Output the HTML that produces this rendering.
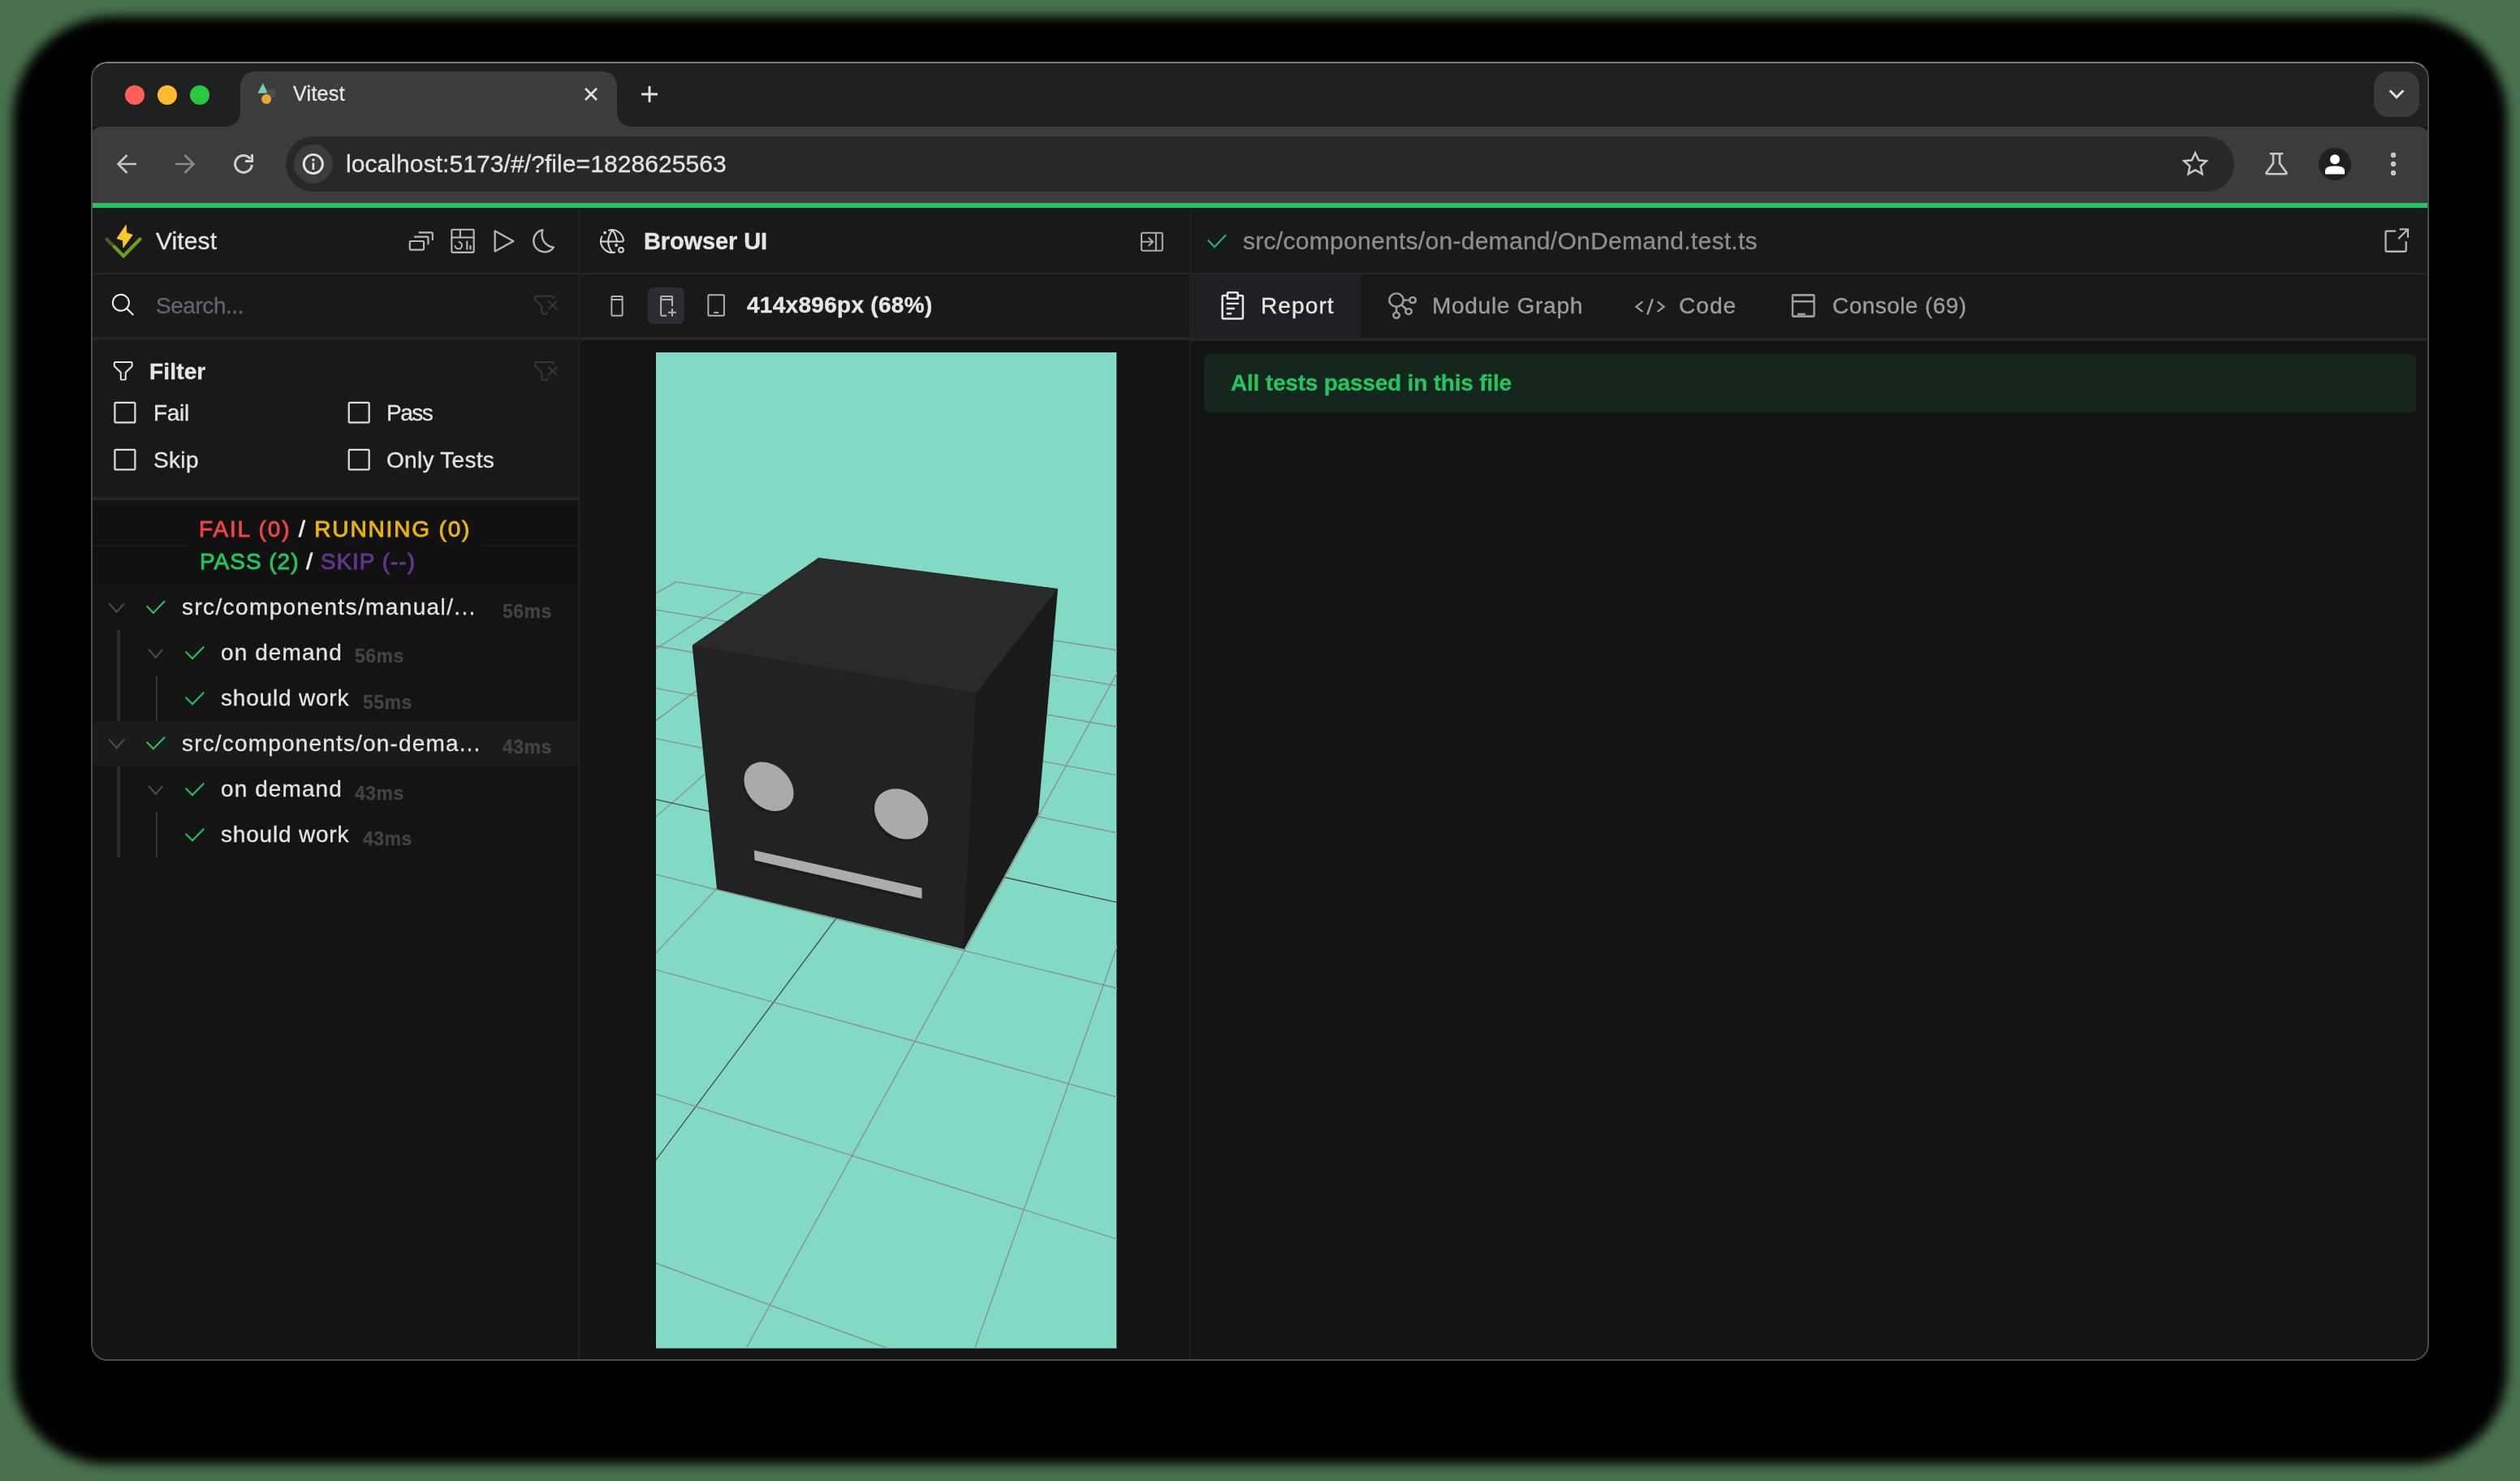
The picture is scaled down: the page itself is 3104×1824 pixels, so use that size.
<!DOCTYPE html><html><head><meta charset="utf-8"><style>
html,body{margin:0;padding:0;}
body{width:3104px;height:1824px;background:#48724e;position:relative;overflow:hidden;font-family:"Liberation Sans", sans-serif;}
.t{position:absolute;white-space:nowrap;line-height:1;-webkit-text-stroke:0.3px currentColor;will-change:transform;}
.r{position:absolute;}
.s{position:absolute;overflow:visible;}
#win{position:absolute;left:112px;top:76px;width:2880px;height:1600px;border-radius:20px;overflow:hidden;background:#141414;}
#frame{position:absolute;left:-112px;top:-76px;width:3104px;height:1824px;}
</style></head><body>
<div class="r" style="left:16px;top:20px;width:3072px;height:1783px;background:#000;border-radius:125px 125px 115px 115px;filter:blur(7px);"></div>
<div id="win"><div id="frame">
<div class="r" style="left:112px;top:76px;width:2880px;height:80px;background:#1f2020;border-radius:0px;"></div>
<div class="r" style="left:154px;top:105px;width:24px;height:24px;background:#ff5f57;border-radius:12px;"></div>
<div class="r" style="left:194px;top:105px;width:24px;height:24px;background:#febc2e;border-radius:12px;"></div>
<div class="r" style="left:234px;top:105px;width:24px;height:24px;background:#28c840;border-radius:12px;"></div>
<svg class="s" style="left:270px;top:86px;" width="520" height="72" viewBox="270 86 520 72"><path d="M276 156 Q296 156 296 136 L296 108 Q296 88 316 88 L740 88 Q760 88 760 108 L760 136 Q760 156 780 156 Z" fill="#3c3c3c"/></svg>
<svg class="s" style="left:314px;top:100px;" width="28" height="30" viewBox="314 100 28 30"><path d="M323.8 102.5 L330 114.8 L317.5 114.8 Z" fill="#6fd3bd"/><rect x="328.6" y="109.7" width="10.3" height="11.1" fill="#4d4d4d"/><circle cx="328.1" cy="122" r="6" fill="#e9a832"/></svg>
<div id="t_tab" class="t" style="left:361.0px;top:103.1px;font-size:25px;color:#e6e6e6;letter-spacing:0.3px;">Vitest</div>
<svg class="s" style="left:715px;top:103px;" width="26" height="26" viewBox="715 103 26 26"><path d="M721 109 L735 123 M735 109 L721 123" stroke="#e3e3e3" stroke-width="2.6"/></svg>
<svg class="s" style="left:786px;top:102px;" width="28" height="28" viewBox="786 102 28 28"><path d="M790 116 H810 M800 106 V126" stroke="#e3e3e3" stroke-width="2.8"/></svg>
<div class="r" style="left:2924px;top:88px;width:56px;height:56px;background:#3a3a3a;border-radius:18px;"></div>
<svg class="s" style="left:2938px;top:104px;" width="28" height="24" viewBox="2938 104 28 24"><path d="M2943.7 111.4 L2952 119.8 L2960.3 111.4" stroke="#e3e3e3" stroke-width="2.8" fill="none"/></svg>
<div class="r" style="left:112px;top:156px;width:2880px;height:94px;background:#3c3c3c;border-radius:13px 13px 0 0;"></div>
<svg class="s" style="left:140px;top:186px;" width="32" height="32" viewBox="140 186 32 32"><path d="M168 202 H146 M156.5 191 L145.5 202 L156.5 213" stroke="#c7c7c7" stroke-width="2.6" fill="none"/></svg>
<svg class="s" style="left:212px;top:186px;" width="32" height="32" viewBox="212 186 32 32"><path d="M216 202 H238 M227.5 191 L238.5 202 L227.5 213" stroke="#8a8a8a" stroke-width="2.6" fill="none"/></svg>
<svg class="s" style="left:284px;top:186px;" width="32" height="32" viewBox="284 186 32 32"><path d="M308.2 195.6 A10.4 10.4 0 1 0 310.35 203" stroke="#d0d0d0" stroke-width="3" fill="none"/><path d="M302 198.5 H310.5 V189.9" stroke="#d0d0d0" stroke-width="3.1" fill="none" stroke-linejoin="miter"/></svg>
<div class="r" style="left:352px;top:168px;width:2400px;height:68px;background:#282828;border-radius:34px;"></div>
<div class="r" style="left:362px;top:178px;width:48px;height:48px;background:#3c3c3c;border-radius:24px;"></div>
<svg class="s" style="left:370px;top:186px;" width="32" height="32" viewBox="370 186 32 32"><circle cx="385.8" cy="202" r="11.6" stroke="#e3e3e3" stroke-width="2.9" fill="none"/><rect x="384.6" y="200.5" width="2.6" height="8.5" fill="#e3e3e3"/><circle cx="385.9" cy="196.9" r="1.7" fill="#e3e3e3"/></svg>
<div id="t_url" class="t" style="left:425.8px;top:186.7px;font-size:30px;color:#e3e3e3;letter-spacing:0.08px;">localhost:5173/#/?file=1828625563</div>
<svg class="s" style="left:2684px;top:182px;" width="40" height="40" viewBox="2684 182 40 40"><path d="M2704 188.5 L2708.2 197.3 L2717.8 198.3 L2710.6 204.8 L2712.6 214.2 L2704 209.4 L2695.4 214.2 L2697.4 204.8 L2690.2 198.3 L2699.8 197.3 Z" stroke="#c7c7c7" stroke-width="2.5" fill="none"/></svg>
<svg class="s" style="left:2786px;top:184px;" width="36" height="36" viewBox="2786 184 36 36"><path d="M2795.8 189.3 H2812.2 M2800 189.3 V201 L2791.8 212.5 Q2790.8 214.3 2793 214.3 H2815 Q2817.2 214.3 2816.2 212.5 L2808 201 V189.3" stroke="#c7c7c7" stroke-width="2.6" fill="none"/></svg>
<div class="r" style="left:2856px;top:182px;width:40px;height:40px;background:#1f1f1f;border-radius:20px;"></div>
<svg class="s" style="left:2860px;top:186px;" width="32" height="32" viewBox="2860 186 32 32"><circle cx="2876" cy="196.3" r="6" fill="#fff"/><path d="M2864 214.4 V210 Q2864 204.6 2876 204.6 Q2888 204.6 2888 210 V214.4 Z" fill="#fff"/></svg>
<svg class="s" style="left:2940px;top:186px;" width="16" height="32" viewBox="2940 186 16 32"><circle cx="2948" cy="191" r="3.2" fill="#c7c7c7"/><circle cx="2948" cy="202" r="3.2" fill="#c7c7c7"/><circle cx="2948" cy="213" r="3.2" fill="#c7c7c7"/></svg>
<div class="r" style="left:112px;top:250px;width:2880px;height:6px;background:#22c55e;border-radius:0px;"></div>
<div class="r" style="left:112px;top:256px;width:601px;height:360px;background:#18191b;border-radius:0px;"></div>
<div class="r" style="left:112px;top:616px;width:601px;height:1060px;background:#141414;border-radius:0px;"></div>
<div class="r" style="left:112px;top:624px;width:601px;height:96px;background:#111111;border-radius:0px;"></div>
<div class="r" style="left:112px;top:336px;width:601px;height:2px;background:#242527;border-radius:0px;"></div>
<div class="r" style="left:112px;top:415px;width:601px;height:4px;background:#242527;border-radius:0px;"></div>
<div class="r" style="left:112px;top:612px;width:601px;height:4px;background:#242527;border-radius:0px;"></div>
<div class="r" style="left:112px;top:671px;width:118px;height:2px;background:#1c1c1c;border-radius:0px;"></div>
<div class="r" style="left:594px;top:671px;width:119px;height:2px;background:#1c1c1c;border-radius:0px;"></div>
<div class="r" style="left:712px;top:256px;width:2px;height:1420px;background:#202020;border-radius:0px;"></div>
<div class="r" style="left:714px;top:256px;width:752px;height:163px;background:#18191b;border-radius:0px;"></div>
<div class="r" style="left:714px;top:336px;width:752px;height:2px;background:#242527;border-radius:0px;"></div>
<div class="r" style="left:714px;top:415px;width:752px;height:4px;background:#242527;border-radius:0px;"></div>
<div class="r" style="left:1465px;top:256px;width:2px;height:1420px;background:#202020;border-radius:0px;"></div>
<div class="r" style="left:1467px;top:256px;width:1525px;height:164px;background:#18191b;border-radius:0px;"></div>
<div class="r" style="left:1467px;top:336px;width:1525px;height:2px;background:#242527;border-radius:0px;"></div>
<div class="r" style="left:1467px;top:338px;width:209px;height:78px;background:#1f2023;border-radius:0px;"></div>
<div class="r" style="left:1467px;top:416px;width:1525px;height:4px;background:#242527;border-radius:0px;"></div>
<svg class="s" style="left:126px;top:272px;" width="52" height="50" viewBox="126 272 52 50"><path d="M131.3 294.5 L141.2 304.3" stroke="#4b5e1d" stroke-width="4.2" fill="none" stroke-linecap="round"/>
<path d="M141 304.1 L152.1 315.3 L172.5 294.5" stroke="#729b1b" stroke-width="4.2" fill="none" stroke-linecap="round" stroke-linejoin="miter"/>
<path d="M155.3 277.1 L155.8 286.7 L163.3 289.3 L151.9 304.9 L151.4 296 L143.9 293.8 Z" fill="#fcc72b" stroke="#fcc72b" stroke-width="0.8" stroke-linejoin="round"/></svg>
<div id="t_side" class="t" style="left:192.3px;top:282.0px;font-size:30px;color:#e3e3e3;letter-spacing:0.1px;">Vitest</div>
<svg class="s" style="left:0;top:0" width="3104" height="1824" viewBox="0 0 3104 1824"><g transform="matrix(1.0786 0 0 1.0636 501.54 279.98)" fill="#b9b9b9"><path d="M30 15h-2V7H13V5h15a2.002 2.002 0 0 1 2 2z"/><path d="M25 20h-2v-8H8v-2h15a2.002 2.002 0 0 1 2 2z"/><path d="M18 27H4a2.002 2.002 0 0 1-2-2v-8a2.002 2.002 0 0 1 2-2h14a2.002 2.002 0 0 1 2 2v8a2.002 2.002 0 0 1-2 2zM4 17v8h14.001L18 17z"/></g></svg>
<svg class="s" style="left:0;top:0" width="3104" height="1824" viewBox="0 0 3104 1824"><g transform="matrix(1.0500 0 0 1.0786 553.20 279.54)" fill="#b9b9b9"><path d="M24 21h2v5h-2zm-4-5h2v10h-2zm-9 10a5.006 5.006 0 0 1-5-5h2a3 3 0 1 0 3-3v-2a5 5 0 0 1 0 10z"/><path d="M28 2H4a2.002 2.002 0 0 0-2 2v24a2.002 2.002 0 0 0 2 2h24a2.003 2.003 0 0 0 2-2V4a2.002 2.002 0 0 0-2-2zm.001 9H14V4h14zM12 4v7H4V4zM4 28V13h24l.002 15z"/></g></svg>
<svg class="s" style="left:0;top:0" width="3104" height="1824" viewBox="0 0 3104 1824"><g transform="matrix(1.1364 0 0 1.1417 601.68 278.73)" fill="#b9b9b9"><path d="M7 28a1 1 0 0 1-1-1V5a1 1 0 0 1 1.482-.876l20 11a1 1 0 0 1 0 1.752l-20 11A1 1 0 0 1 7 28zM8 6.69v18.62L24.925 16z"/></g></svg>
<svg class="s" style="left:0;top:0" width="3104" height="1824" viewBox="0 0 3104 1824"><g transform="matrix(1.1256 0 0 1.1308 651.59 278.71)" fill="#b9b9b9"><path d="M13.503 5.414a15.076 15.076 0 0 0 11.593 18.194a11.113 11.113 0 0 1-7.975 3.39c-.138 0-.278.005-.418 0a11.094 11.094 0 0 1-3.2-21.584M14.98 3a1.002 1.002 0 0 0-.175.016a13.096 13.096 0 0 0 1.825 25.981c.164.006.328 0 .49 0a13.072 13.072 0 0 0 10.703-5.555a1.01 1.01 0 0 0-.783-1.565A13.08 13.08 0 0 1 15.89 4.38A1.015 1.015 0 0 0 14.98 3z"/></g></svg>
<svg class="s" style="left:0;top:0" width="3104" height="1824" viewBox="0 0 3104 1824"><g transform="matrix(1.0061 0 0 0.9950 135.82 359.85)" fill="#ececec"><path d="M29 27.586l-7.552-7.552a11.018 11.018 0 1 0-1.414 1.414L27.586 29zM4 13a9 9 0 1 1 9 9a9.01 9.01 0 0 1-9-9z"/></g></svg>
<div id="t_search" class="t" style="left:192.0px;top:362.6px;font-size:28px;color:#62656b;letter-spacing:-0.45px;">Search...</div>
<svg class="s" style="left:0;top:0" width="3104" height="1824" viewBox="0 0 3104 1824"><g transform="matrix(1.0357 0 0 0.9875 655.93 359.85)" fill="#36373a"><path d="M30 11.414L28.586 10L24 14.586L19.414 10L18 11.414L22.586 16L18 20.585L19.415 22L24 17.414L28.587 22L30 20.587L25.414 16L30 11.414z"/><path d="M4 4a2 2 0 0 0-2 2v3.17a2 2 0 0 0 .586 1.415L10 18v8a2 2 0 0 0 2 2h4a2 2 0 0 0 2-2v-2h-2v2h-4v-8.83l-.586-.585L4 9.171V6h20v2h2V6a2 2 0 0 0-2-2z"/></g></svg>
<svg class="s" style="left:0;top:0" width="3104" height="1824" viewBox="0 0 3104 1824"><g transform="matrix(0.9958 0 0 0.9833 135.82 441.07)" fill="#e3e3e3"><path d="M18 28h-4a2 2 0 0 1-2-2v-7.59L4.59 11A2 2 0 0 1 4 9.59V6a2 2 0 0 1 2-2h20a2 2 0 0 1 2 2v3.59a2 2 0 0 1-.59 1.41L20 18.41V26a2 2 0 0 1-2 2zM6 6v3.59l8 8V26h4v-8.41l8-8V6z"/></g></svg>
<div id="t_filter" class="t" style="left:184.0px;top:443.7px;font-size:28px;color:#e6e6e6;font-weight:700;letter-spacing:0.16px;">Filter</div>
<svg class="s" style="left:0;top:0" width="3104" height="1824" viewBox="0 0 3104 1824"><g transform="matrix(1.0357 0 0 1.0000 655.93 441.00)" fill="#36373a"><path d="M30 11.414L28.586 10L24 14.586L19.414 10L18 11.414L22.586 16L18 20.585L19.415 22L24 17.414L28.587 22L30 20.587L25.414 16L30 11.414z"/><path d="M4 4a2 2 0 0 0-2 2v3.17a2 2 0 0 0 .586 1.415L10 18v8a2 2 0 0 0 2 2h4a2 2 0 0 0 2-2v-2h-2v2h-4v-8.83l-.586-.585L4 9.171V6h20v2h2V6a2 2 0 0 0-2-2z"/></g></svg>
<svg class="s" style="left:0;top:0" width="3104" height="1824" viewBox="0 0 3104 1824"><g transform="matrix(1.1333 0 0 1.1167 135.77 490.23)" fill="#dadada"><path d="M26 4H6a2 2 0 0 0-2 2v20a2 2 0 0 0 2 2h20a2 2 0 0 0 2-2V6a2 2 0 0 0-2-2zM6 26V6h20v20z"/></g></svg>
<svg class="s" style="left:0;top:0" width="3104" height="1824" viewBox="0 0 3104 1824"><g transform="matrix(1.1333 0 0 1.1167 424.07 490.23)" fill="#dadada"><path d="M26 4H6a2 2 0 0 0-2 2v20a2 2 0 0 0 2 2h20a2 2 0 0 0 2-2V6a2 2 0 0 0-2-2zM6 26V6h20v20z"/></g></svg>
<svg class="s" style="left:0;top:0" width="3104" height="1824" viewBox="0 0 3104 1824"><g transform="matrix(1.1333 0 0 1.1167 135.77 548.33)" fill="#dadada"><path d="M26 4H6a2 2 0 0 0-2 2v20a2 2 0 0 0 2 2h20a2 2 0 0 0 2-2V6a2 2 0 0 0-2-2zM6 26V6h20v20z"/></g></svg>
<svg class="s" style="left:0;top:0" width="3104" height="1824" viewBox="0 0 3104 1824"><g transform="matrix(1.1333 0 0 1.1167 424.07 548.33)" fill="#dadada"><path d="M26 4H6a2 2 0 0 0-2 2v20a2 2 0 0 0 2 2h20a2 2 0 0 0 2-2V6a2 2 0 0 0-2-2zM6 26V6h20v20z"/></g></svg>
<div id="t_fail" class="t" style="left:189.0px;top:494.5px;font-size:28px;color:#e3e3e3;letter-spacing:-0.33px;">Fail</div>
<div id="t_pass" class="t" style="left:476.0px;top:494.5px;font-size:28px;color:#e3e3e3;letter-spacing:-1.5px;">Pass</div>
<div id="t_skip" class="t" style="left:189.0px;top:552.6px;font-size:28px;color:#e3e3e3;letter-spacing:0.33px;">Skip</div>
<div id="t_only" class="t" style="left:476.4px;top:552.6px;font-size:28px;color:#e3e3e3;letter-spacing:0.28px;">Only Tests</div>
<div id="t_sum1" class="t" style="left:244.6px;top:638.1px;font-size:28px;letter-spacing:1.85px;-webkit-text-stroke:0.9px currentColor;"><span style="color:#ef4444">FAIL (0)</span> <span style="color:#e8e8e8">/</span> <span style="color:#eab308">RUNNING (0)</span></div>
<div id="t_sum2" class="t" style="left:245.6px;top:678.0px;font-size:28px;letter-spacing:0.98px;-webkit-text-stroke:0.9px currentColor;"><span style="color:#22c55e">PASS (2)</span> <span style="color:#e8e8e8">/</span> <span style="color:#62368e">SKIP (--)</span></div>
<div class="r" style="left:114px;top:888px;width:598px;height:56px;background:#1b1b1b;border-radius:8px;"></div>
<div class="r" style="left:144px;top:776px;width:4px;height:112px;background:#2a2d30;border-radius:0px;"></div>
<div class="r" style="left:144px;top:944px;width:4px;height:112px;background:#2a2d30;border-radius:0px;"></div>
<div class="r" style="left:192px;top:832px;width:2px;height:56px;background:#34373a;border-radius:0px;"></div>
<div class="r" style="left:192px;top:1000px;width:2px;height:56px;background:#34373a;border-radius:0px;"></div>
<svg class="s" style="left:0;top:0" width="3104" height="1824" viewBox="0 0 3104 1824"><g transform="matrix(1.0000 0 0 1.0965 127.70 730.88)" fill="#4d4d4d"><path d="M16 22L6 12l1.4-1.4l8.6 8.6l8.6-8.6L26 12z"/></g></svg>
<svg class="s" style="left:0;top:0" width="3104" height="1824" viewBox="0 0 3104 1824"><g transform="matrix(0.9875 0 0 1.0171 176.05 731.79)" fill="#22c55e"><path d="M13 24l-9-9l1.41-1.41L13 21.17L26.59 7.58L28 9L13 24z"/></g></svg>
<div class="t" style="left:224.0px;top:734.3px;font-size:28px;color:#e3e3e3;letter-spacing:1.375px;">src/components/manual/...</div>
<div class="t" style="left:619.0px;top:741.5px;font-size:23px;color:#434343;font-weight:700;letter-spacing:0.45px;">56ms</div>
<svg class="s" style="left:0;top:0" width="3104" height="1824" viewBox="0 0 3104 1824"><g transform="matrix(0.9400 0 0 1.0965 176.76 787.08)" fill="#4d4d4d"><path d="M16 22L6 12l1.4-1.4l8.6 8.6l8.6-8.6L26 12z"/></g></svg>
<svg class="s" style="left:0;top:0" width="3104" height="1824" viewBox="0 0 3104 1824"><g transform="matrix(1.0000 0 0 1.0171 223.90 787.99)" fill="#22c55e"><path d="M13 24l-9-9l1.41-1.41L13 21.17L26.59 7.58L28 9L13 24z"/></g></svg>
<div class="t" style="left:272.0px;top:790.0px;font-size:28px;color:#e3e3e3;letter-spacing:1.09px;">on demand</div>
<div class="t" style="left:436.5px;top:797.2px;font-size:23px;color:#434343;font-weight:700;letter-spacing:0.45px;">56ms</div>
<svg class="s" style="left:0;top:0" width="3104" height="1824" viewBox="0 0 3104 1824"><g transform="matrix(1.0000 0 0 1.0171 223.90 844.29)" fill="#22c55e"><path d="M13 24l-9-9l1.41-1.41L13 21.17L26.59 7.58L28 9L13 24z"/></g></svg>
<div class="t" style="left:272.0px;top:846.3px;font-size:28px;color:#e3e3e3;letter-spacing:0.8px;">should work</div>
<div class="t" style="left:446.5px;top:853.5px;font-size:23px;color:#434343;font-weight:700;letter-spacing:0.45px;">55ms</div>
<svg class="s" style="left:0;top:0" width="3104" height="1824" viewBox="0 0 3104 1824"><g transform="matrix(1.0000 0 0 1.0965 127.70 898.38)" fill="#4d4d4d"><path d="M16 22L6 12l1.4-1.4l8.6 8.6l8.6-8.6L26 12z"/></g></svg>
<svg class="s" style="left:0;top:0" width="3104" height="1824" viewBox="0 0 3104 1824"><g transform="matrix(0.9875 0 0 1.0171 176.05 899.29)" fill="#22c55e"><path d="M13 24l-9-9l1.41-1.41L13 21.17L26.59 7.58L28 9L13 24z"/></g></svg>
<div class="t" style="left:224.0px;top:901.8px;font-size:28px;color:#e3e3e3;letter-spacing:1.17px;">src/components/on-dema...</div>
<div class="t" style="left:619.0px;top:909.0px;font-size:23px;color:#434343;font-weight:700;letter-spacing:0.45px;">43ms</div>
<svg class="s" style="left:0;top:0" width="3104" height="1824" viewBox="0 0 3104 1824"><g transform="matrix(0.9400 0 0 1.0965 176.76 955.38)" fill="#4d4d4d"><path d="M16 22L6 12l1.4-1.4l8.6 8.6l8.6-8.6L26 12z"/></g></svg>
<svg class="s" style="left:0;top:0" width="3104" height="1824" viewBox="0 0 3104 1824"><g transform="matrix(1.0000 0 0 1.0171 223.90 956.29)" fill="#22c55e"><path d="M13 24l-9-9l1.41-1.41L13 21.17L26.59 7.58L28 9L13 24z"/></g></svg>
<div class="t" style="left:272.0px;top:958.3px;font-size:28px;color:#e3e3e3;letter-spacing:1.09px;">on demand</div>
<div class="t" style="left:436.5px;top:965.5px;font-size:23px;color:#434343;font-weight:700;letter-spacing:0.45px;">43ms</div>
<svg class="s" style="left:0;top:0" width="3104" height="1824" viewBox="0 0 3104 1824"><g transform="matrix(1.0000 0 0 1.0171 223.90 1012.29)" fill="#22c55e"><path d="M13 24l-9-9l1.41-1.41L13 21.17L26.59 7.58L28 9L13 24z"/></g></svg>
<div class="t" style="left:272.0px;top:1014.3px;font-size:28px;color:#e3e3e3;letter-spacing:0.8px;">should work</div>
<div class="t" style="left:446.5px;top:1021.5px;font-size:23px;color:#434343;font-weight:700;letter-spacing:0.45px;">43ms</div>
<svg class="s" style="left:736px;top:279px;" width="36" height="36" viewBox="736 279 36 36"><path d="M749.3 284.04 A13.9 13.9 0 0 1 767.95 297.1 M757.88 310.46 A13.9 13.9 0 0 1 741.66 290.79" stroke="#d6d6d6" stroke-width="2" fill="none"/>
<path d="M740.1 297.4 H767.9 M754.3 283.3 Q744.2 297.4 753.9 310.8 M754.3 283.3 Q759 289 759.8 297" stroke="#d6d6d6" stroke-width="2" fill="none"/>
<circle cx="745.1" cy="286.6" r="1.9" fill="#d6d6d6"/><circle cx="759.1" cy="302" r="1.9" fill="#d6d6d6"/><circle cx="765" cy="307.9" r="2.9" stroke="#d6d6d6" stroke-width="1.9" fill="none"/></svg>
<div id="t_bui" class="t" style="left:792.8px;top:283.4px;font-size:29px;color:#e6e6e6;font-weight:700;letter-spacing:-0.12px;">Browser UI</div>
<svg class="s" style="left:1400px;top:280px;" width="40" height="36" viewBox="1400 280 40 36"><rect x="1406" y="286.8" width="25.8" height="22" rx="2" stroke="#a9abab" stroke-width="2.1" fill="none"/><path d="M1423.9 286.8 V308.8 M1406 297.8 H1419.5 M1414.6 292.5 L1420 297.8 L1414.6 303.1" stroke="#a9abab" stroke-width="2.1" fill="none"/></svg>
<svg class="s" style="left:0;top:0" width="3104" height="1824" viewBox="0 0 3104 1824"><g transform="matrix(0.9500 0 0 0.9923 744.80 360.03)" fill="#b0b0b0"><path d="M22 4H10a2.002 2.002 0 0 0-2 2v22a2.002 2.002 0 0 0 2 2h12a2.003 2.003 0 0 0 2-2V6a2.002 2.002 0 0 0-2-2zm0 2v2H10V6zM10 28V10h12v18z"/></g></svg>
<div class="r" style="left:798.4px;top:354.3px;width:44.3px;height:44.3px;background:#2c2d30;border-radius:7px;"></div>
<svg class="s" style="left:0;top:0" width="3104" height="1824" viewBox="0 0 3104 1824"><g transform="matrix(0.9950 0 0 0.9923 805.14 360.03)" fill="#b0b0b0"><path d="M28 24h-4v-4h-2v4h-4v2h4v4h2v-4h4v-2z"/><path d="M10 28V10h12v7h2V6a2.002 2.002 0 0 0-2-2H10a2.002 2.002 0 0 0-2 2v22a2.002 2.002 0 0 0 2 2h6v-2zm0-22h12v2H10z"/></g></svg>
<svg class="s" style="left:0;top:0" width="3104" height="1824" viewBox="0 0 3104 1824"><g transform="matrix(0.9773 0 0 0.9821 866.51 360.34)" fill="#b0b0b0"><path d="M19 24v2h-6v-2z"/><path d="M25 30H7a2.002 2.002 0 0 1-2-2V4a2.002 2.002 0 0 1 2-2h18a2.002 2.002 0 0 1 2 2v24a2.003 2.003 0 0 1-2 2zM7 4v24h18V4z"/></g></svg>
<div id="t_dim" class="t" style="left:920.4px;top:362.3px;font-size:28px;color:#e6e6e6;font-weight:700;letter-spacing:0.29px;">414x896px (68%)</div>
<svg class="s" style="left:808.3px;top:434.4px;overflow:hidden;" width="567.3" height="1226.6" viewBox="808.3 434.4 567.3 1226.6"><rect x="808.3" y="434.4" width="567.3" height="1226.6" fill="#82dac5"/><path d="M833.0 717.0 L1857.4 875.7" stroke="#8c8c8c" stroke-width="1.3"/><path d="M833.0 717.0 L-304.5 1363.7" stroke="#8c8c8c" stroke-width="1.3"/><path d="M780.4 746.9 L1868.4 925.9" stroke="#8c8c8c" stroke-width="1.3"/><path d="M916.2 729.9 L-164.2 1425.8" stroke="#8c8c8c" stroke-width="1.3"/><path d="M721.2 780.6 L1881.3 984.4" stroke="#8c8c8c" stroke-width="1.3"/><path d="M1003.0 743.4 L-9.4 1494.4" stroke="#8c8c8c" stroke-width="1.3"/><path d="M653.9 818.8 L1896.5 1053.5" stroke="#8c8c8c" stroke-width="1.3"/><path d="M1093.5 757.4 L162.3 1570.4" stroke="#8c8c8c" stroke-width="1.3"/><path d="M576.8 862.7 L1914.7 1136.2" stroke="#8c8c8c" stroke-width="1.3"/><path d="M1188.1 772.0 L353.7 1655.2" stroke="#8c8c8c" stroke-width="1.3"/><path d="M487.6 913.4 L1936.9 1237.0" stroke="#4a4a4a" stroke-width="1.3"/><path d="M1287.0 787.3 L568.5 1750.3" stroke="#4a4a4a" stroke-width="1.3"/><path d="M383.2 972.7 L1964.6 1362.8" stroke="#8c8c8c" stroke-width="1.3"/><path d="M1390.4 803.4 L811.3 1857.8" stroke="#8c8c8c" stroke-width="1.3"/><path d="M259.3 1043.1 L2000.0 1523.9" stroke="#8c8c8c" stroke-width="1.3"/><path d="M1498.8 820.1 L1087.9 1980.3" stroke="#8c8c8c" stroke-width="1.3"/><path d="M110.0 1128.0 L2047.1 1737.6" stroke="#8c8c8c" stroke-width="1.3"/><path d="M1612.5 837.7 L1405.9 2121.1" stroke="#8c8c8c" stroke-width="1.3"/><path d="M-73.5 1232.4 L2112.5 2035.1" stroke="#8c8c8c" stroke-width="1.3"/><path d="M1731.9 856.2 L1775.4 2284.7" stroke="#8c8c8c" stroke-width="1.3"/><path d="M-304.5 1363.7 L2209.8 2477.1" stroke="#8c8c8c" stroke-width="1.3"/><path d="M1857.4 875.7 L2209.8 2477.1" stroke="#8c8c8c" stroke-width="1.3"/><polygon points="1008.6,687.6 1302.9,725.7 1278.9,1002.9 1187.7,1169.0 883.7,1095.1 853.3,795.2" fill="#212121"/>
<polygon points="853.3,795.2 1202.9,853.3 1187.7,1169.0 883.7,1095.1" fill="#222222" stroke="#222222" stroke-width="0.6"/>
<polygon points="1202.9,853.3 1302.9,725.7 1278.9,1002.9 1187.7,1169.0" fill="#1a1a1a" stroke="#1a1a1a" stroke-width="0.6"/>
<polygon points="1008.6,687.6 1302.9,725.7 1202.9,853.3 853.3,795.2" fill="#2a2a2a" stroke="#2a2a2a" stroke-width="0.6"/>
<polygon points="975.3,979.3 975.3,982.2 975.0,985.0 974.4,987.6 973.5,990.1 972.4,992.4 970.9,994.6 969.3,996.5 967.4,998.2 965.3,999.6 963.0,1000.8 960.5,1001.7 957.9,1002.4 955.2,1002.7 952.3,1002.8 949.4,1002.6 946.5,1002.1 943.6,1001.3 940.6,1000.3 937.7,999.0 934.9,997.4 932.1,995.7 929.5,993.7 927.0,991.5 924.7,989.1 922.6,986.6 920.7,984.0 919.0,981.2 917.5,978.4 916.3,975.5 915.4,972.5 914.7,969.6 914.4,966.7 914.3,963.8 914.5,961.1 915.0,958.4 915.7,955.9 916.8,953.5 918.1,951.3 919.7,949.3 921.6,947.5 923.6,946.0 925.9,944.7 928.4,943.7 931.0,943.0 933.7,942.5 936.6,942.4 939.6,942.6 942.6,943.0 945.6,943.8 948.6,944.8 951.6,946.1 954.6,947.7 957.4,949.5 960.1,951.6 962.6,953.8 965.0,956.3 967.2,958.9 969.1,961.6 970.8,964.5 972.3,967.4 973.5,970.4 974.4,973.4 975.0,976.4" fill="#1c1c1c"/>
<polygon points="1141.0,1013.7 1140.8,1016.6 1140.2,1019.4 1139.3,1022.2 1138.2,1024.7 1136.7,1027.1 1135.0,1029.2 1133.0,1031.2 1130.8,1032.9 1128.3,1034.4 1125.7,1035.5 1122.9,1036.4 1120.0,1037.1 1116.9,1037.4 1113.8,1037.4 1110.6,1037.2 1107.4,1036.6 1104.2,1035.8 1101.1,1034.7 1098.0,1033.3 1095.0,1031.7 1092.1,1029.9 1089.4,1027.8 1086.8,1025.5 1084.5,1023.1 1082.3,1020.5 1080.4,1017.7 1078.8,1014.9 1077.4,1012.0 1076.3,1009.0 1075.5,1006.0 1075.1,1003.0 1074.9,1000.0 1075.0,997.0 1075.5,994.2 1076.2,991.5 1077.3,988.9 1078.7,986.5 1080.3,984.2 1082.2,982.2 1084.4,980.4 1086.8,978.8 1089.4,977.6 1092.2,976.6 1095.1,975.8 1098.2,975.4 1101.4,975.3 1104.6,975.5 1107.9,976.0 1111.2,976.8 1114.5,977.9 1117.7,979.3 1120.8,981.0 1123.7,982.9 1126.5,985.0 1129.2,987.4 1131.6,989.9 1133.8,992.6 1135.7,995.4 1137.3,998.4 1138.7,1001.4 1139.7,1004.5 1140.5,1007.6 1140.9,1010.6" fill="#1c1c1c"/>
<polygon points="926.7,1051.1 1133.3,1097.7 1133.3,1110.6 927.3,1063.4" fill="#1c1c1c"/>
<polygon points="977.8,975.8 977.8,978.7 977.5,981.5 976.9,984.1 976.0,986.6 974.9,988.9 973.4,991.1 971.8,993.0 969.9,994.7 967.8,996.1 965.5,997.3 963.0,998.2 960.4,998.9 957.7,999.2 954.8,999.3 951.9,999.1 949.0,998.6 946.1,997.8 943.1,996.8 940.2,995.5 937.4,993.9 934.6,992.2 932.0,990.2 929.5,988.0 927.2,985.6 925.1,983.1 923.2,980.5 921.5,977.7 920.0,974.9 918.8,972.0 917.9,969.0 917.2,966.1 916.9,963.2 916.8,960.3 917.0,957.6 917.5,954.9 918.2,952.4 919.3,950.0 920.6,947.8 922.2,945.8 924.1,944.0 926.1,942.5 928.4,941.2 930.9,940.2 933.5,939.5 936.2,939.0 939.1,938.9 942.1,939.1 945.1,939.5 948.1,940.3 951.1,941.3 954.1,942.6 957.1,944.2 959.9,946.0 962.6,948.1 965.1,950.3 967.5,952.8 969.7,955.4 971.6,958.1 973.3,961.0 974.8,963.9 976.0,966.9 976.9,969.9 977.5,972.9" fill="#aaaaaa"/>
<polygon points="1143.5,1010.2 1143.3,1013.1 1142.7,1015.9 1141.8,1018.7 1140.7,1021.2 1139.2,1023.6 1137.5,1025.7 1135.5,1027.7 1133.3,1029.4 1130.8,1030.9 1128.2,1032.0 1125.4,1032.9 1122.5,1033.6 1119.4,1033.9 1116.3,1033.9 1113.1,1033.7 1109.9,1033.1 1106.7,1032.3 1103.6,1031.2 1100.5,1029.8 1097.5,1028.2 1094.6,1026.4 1091.9,1024.3 1089.3,1022.0 1087.0,1019.6 1084.8,1017.0 1082.9,1014.2 1081.3,1011.4 1079.9,1008.5 1078.8,1005.5 1078.0,1002.5 1077.6,999.5 1077.4,996.5 1077.5,993.5 1078.0,990.7 1078.7,988.0 1079.8,985.4 1081.2,983.0 1082.8,980.7 1084.7,978.7 1086.9,976.9 1089.3,975.3 1091.9,974.1 1094.7,973.1 1097.6,972.3 1100.7,971.9 1103.9,971.8 1107.1,972.0 1110.4,972.5 1113.7,973.3 1117.0,974.4 1120.2,975.8 1123.3,977.5 1126.2,979.4 1129.0,981.5 1131.7,983.9 1134.1,986.4 1136.3,989.1 1138.2,991.9 1139.8,994.9 1141.2,997.9 1142.2,1001.0 1143.0,1004.1 1143.4,1007.1" fill="#aaaaaa"/>
<polygon points="929.2,1047.6 1135.8,1094.2 1135.8,1107.1 929.8,1059.9" fill="#acacac"/></svg>
<svg class="s" style="left:0;top:0" width="3104" height="1824" viewBox="0 0 3104 1824"><g transform="matrix(0.9917 0 0 1.0414 1483.03 280.61)" fill="#22c55e"><path d="M13 24l-9-9l1.41-1.41L13 21.17L26.59 7.58L28 9L13 24z"/></g></svg>
<div id="t_path" class="t" style="left:1531.0px;top:282.1px;font-size:30px;color:#8e8e8e;letter-spacing:0.29px;">src/components/on-demand/OnDemand.test.ts</div>
<svg class="s" style="left:0;top:0" width="3104" height="1824" viewBox="0 0 3104 1824"><g transform="matrix(1.1423 0 0 1.1423 2932.83 278.92)" fill="#b5b5b5"><path d="M26 28H6a2.003 2.003 0 0 1-2-2V6a2.003 2.003 0 0 1 2-2h10v2H6v20h20V16h2v10a2.003 2.003 0 0 1-2 2z"/><path d="M20 2v2h6.586L18 12.586L19.414 14L28 5.414V12h2V2H20z"/></g></svg>
<svg class="s" style="left:0;top:0" width="3104" height="1824" viewBox="0 0 3104 1824"><g transform="matrix(1.2636 0 0 1.2393 1498.08 356.52)" fill="#e6e6e6"><path d="M10 18h8v2h-8zm0-5h12v2H10zm0 10h5v2h-5z"/><path d="M25 5h-3V4a2 2 0 0 0-2-2h-8a2 2 0 0 0-2 2v1H7a2 2 0 0 0-2 2v21a2 2 0 0 0 2 2h18a2 2 0 0 0 2-2V7a2 2 0 0 0-2-2zM12 4h8v4h-8zm13 24H7V7h3v3h12V7h3z"/></g></svg>
<div id="t_report" class="t" style="left:1553.4px;top:363.3px;font-size:28px;color:#e6e6e6;letter-spacing:1.12px;">Report</div>
<svg class="s" style="left:0;top:0" width="3104" height="1824" viewBox="0 0 3104 1824"><g transform="matrix(1.2500 0 0 1.1637 1707.50 357.97)" fill="#9e9e9e"><path d="M26 6a3.996 3.996 0 0 0-3.858 3H17.93A7.996 7.996 0 1 0 9 17.93v4.212a4 4 0 1 0 2 0v-4.211a7.951 7.951 0 0 0 3.898-1.62l3.669 3.67A3.953 3.953 0 0 0 18 22a4 4 0 1 0 4-4a3.952 3.952 0 0 0-2.019.567l-3.67-3.67A7.95 7.95 0 0 0 17.932 11h4.211A3.993 3.993 0 1 0 26 6zM12 26a2 2 0 1 1-2-2a2.002 2.002 0 0 1 2 2zm-2-10a6 6 0 1 1 6-6a6.007 6.007 0 0 1-6 6zm14 6a2 2 0 1 1-2-2a2.002 2.002 0 0 1 2 2zm2-10a2 2 0 1 1 2-2a2.002 2.002 0 0 1-2 2z"/></g></svg>
<div id="t_mg" class="t" style="left:1763.6px;top:363.3px;font-size:28px;color:#9e9e9e;letter-spacing:0.71px;">Module Graph</div>
<svg class="s" style="left:0;top:0" width="3104" height="1824" viewBox="0 0 3104 1824"><g transform="matrix(1.2567 0 0 0.9900 2012.34 361.96)" fill="#9e9e9e"><path d="M31 16l-7 7l-1.41-1.41L28.17 16l-5.58-5.59L24 9l7 7zM1 16l7-7l1.41 1.41L3.83 16l5.58 5.59L8 23l-7-7zm11.42 9.484L17.64 6l1.932.517L14.352 26z"/></g></svg>
<div id="t_code" class="t" style="left:2067.6px;top:363.3px;font-size:28px;color:#9e9e9e;letter-spacing:1.07px;">Code</div>
<svg class="s" style="left:0;top:0" width="3104" height="1824" viewBox="0 0 3104 1824"><g transform="matrix(1.2083 0 0 1.3136 2201.97 355.43)" fill="#9e9e9e"><path d="M10 23h8v2h-8z"/><path d="M26 5H6a2 2 0 0 0-2 2v18a2 2 0 0 0 2 2h20a2 2 0 0 0 2-2V7a2 2 0 0 0-2-2zm0 2v4H6V7zM6 25V13h20v12z"/></g></svg>
<div id="t_console" class="t" style="left:2257.2px;top:363.3px;font-size:28px;color:#9e9e9e;letter-spacing:0.44px;">Console (69)</div>
<div class="r" style="left:1483px;top:436px;width:1493px;height:72px;background:#15261d;border-radius:8px;"></div>
<div id="t_all" class="t" style="left:1515.6px;top:458.4px;font-size:28px;color:#22c55e;font-weight:700;letter-spacing:-0.2px;">All tests passed in this file</div>
</div>
<div class="r" style="left:0;top:0;width:2880px;height:1600px;border-radius:20px;box-sizing:border-box;border:2px solid #4c4c4c;border-top-color:#7a7a7a;"></div>
</div></body></html>
